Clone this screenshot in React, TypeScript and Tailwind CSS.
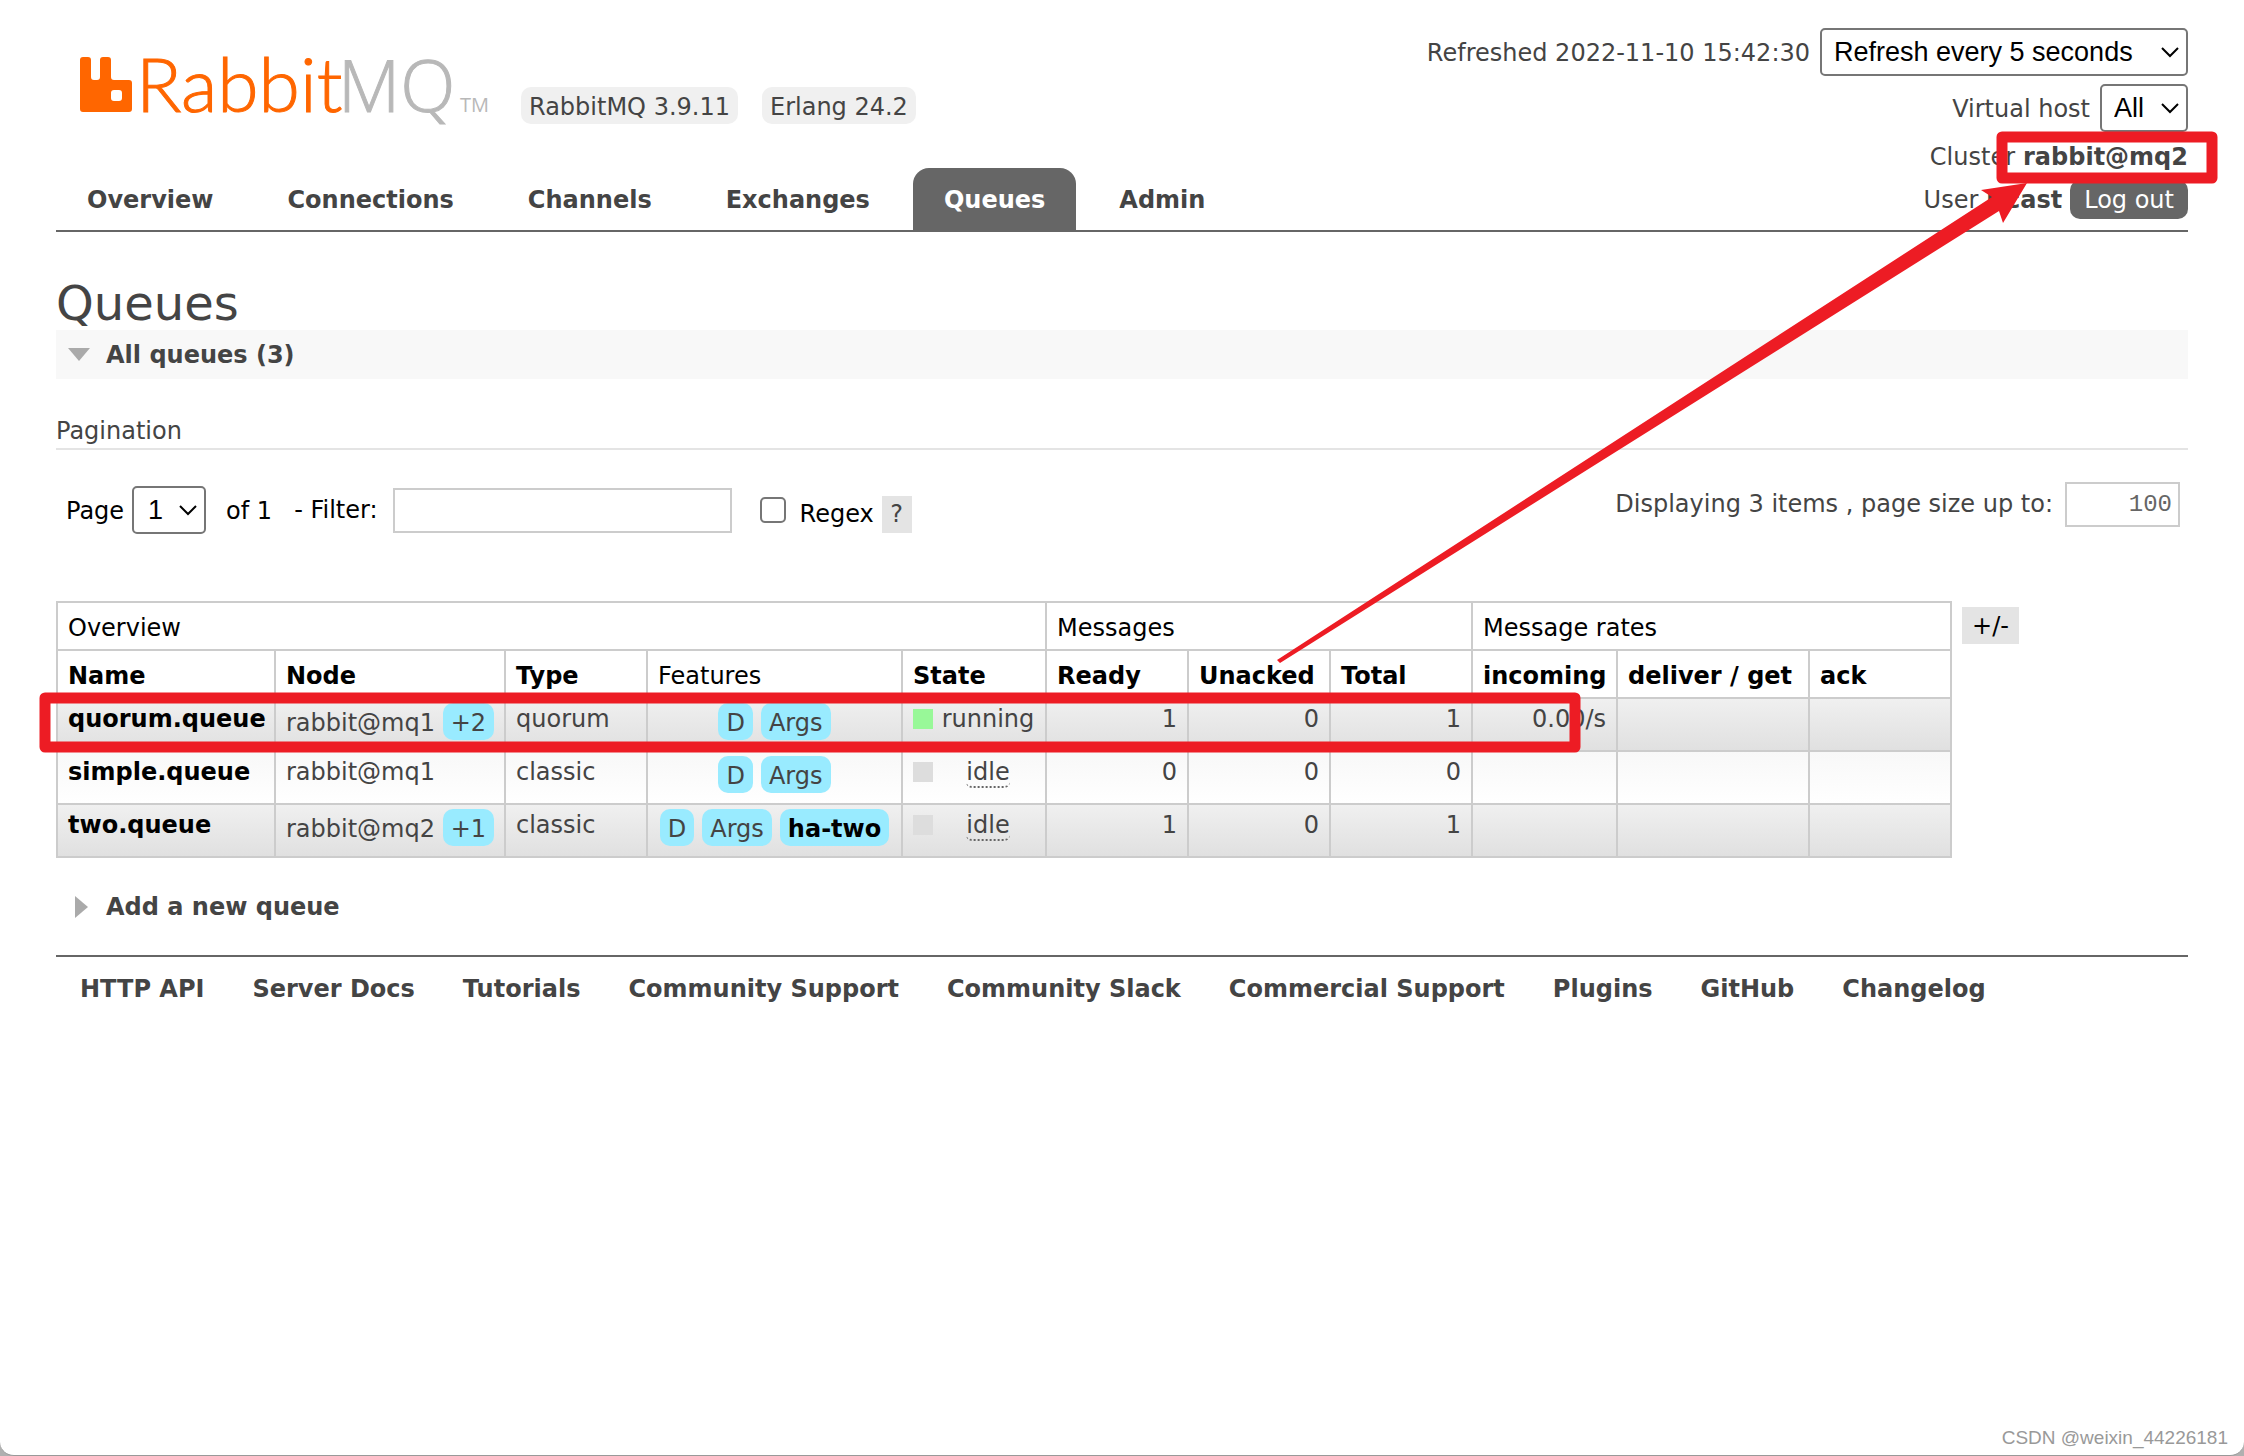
import { ReactNode } from "react";

const tabs = ["Overview", "Connections", "Channels", "Exchanges", "Queues", "Admin"];

const footerLinks = ["HTTP API", "Server Docs", "Tutorials", "Community Support", "Community Slack", "Commercial Support", "Plugins", "GitHub", "Changelog"];

const columns = [
  { label: "Name", width: 218 },
  { label: "Node", width: 230 },
  { label: "Type", width: 142 },
  { label: "Features", width: 255, plain: true },
  { label: "State", width: 144 },
  { label: "Ready", width: 142 },
  { label: "Unacked", width: 142 },
  { label: "Total", width: 142 },
  { label: "incoming", width: 145 },
  { label: "deliver / get", width: 192 },
  { label: "ack", width: 142 },
];

const queues = [
  { name: "quorum.queue", node: "rabbit@mq1", extra: "+2", type: "quorum", policy: "", state: "running", ready: 1, unacked: 0, total: 1, incoming: "0.00/s" },
  { name: "simple.queue", node: "rabbit@mq1", extra: "", type: "classic", policy: "", state: "idle", ready: 0, unacked: 0, total: 0, incoming: "" },
  { name: "two.queue", node: "rabbit@mq2", extra: "+1", type: "classic", policy: "ha-two", state: "idle", ready: 1, unacked: 0, total: 1, incoming: "" },
];

const Logo = () => (
  <svg width="412" height="60" viewBox="0 0 412 60" className="overflow-visible" role="img" aria-label="RabbitMQ">
    <path
      fill="#ff6600"
      d="M3 3h5a3 3 0 0 1 3 3v17a3 3 0 0 0 3 3h3a3 3 0 0 0 3-3V6a3 3 0 0 1 3-3h5a3 3 0 0 1 3 3v17a3 3 0 0 0 3 3h15a3 3 0 0 1 3 3v26a3 3 0 0 1-3 3H3a3 3 0 0 1-3-3V6a3 3 0 0 1 3-3zM34 36a3 3 0 0 0-3 3v5a3 3 0 0 0 3 3h5a3 3 0 0 0 3-3v-5a3 3 0 0 0-3-3z"
    />
    <text x="56" y="58" fontSize="75" fill="#ff6600" stroke="#ff6600" className="font-[Lato,sans-serif] font-light">
      Rabbit
    </text>
    <text x="258" y="58" fontSize="72" fill="#b8b8b8" stroke="#b8b8b8" className="font-['Open_Sans',sans-serif] font-light">
      MQ
    </text>
    <text x="380" y="58" fontSize="20" fill="#b8b8b8" className="font-['Open_Sans',sans-serif]">
      TM
    </text>
  </svg>
);

const Select = ({ id, value, className }: { id: string; value: string; className: string }) => (
  <div className="relative">
    <select
      id={id}
      defaultValue={value}
      className={`h-12 appearance-none rounded-[5px] border-2 border-[#767676] bg-white pl-3 font-['Liberation_Sans',Arial,sans-serif] text-[27px] leading-[32px] text-black ${className}`}
    >
      <option>{value}</option>
    </select>
    <svg width="18" height="12" viewBox="0 0 18 12" className="pointer-events-none absolute top-[18px] right-[9px]">
      <path d="M1 2l8 8 8-8" fill="none" stroke="#000" strokeWidth="2" />
    </svg>
  </div>
);

const Chip = ({ children }: { children: ReactNode }) => <span className="inline-block rounded-[10px] bg-[#99ebff] px-2 pt-[6px] pb-[2px]">{children}</span>;

const Header = () => (
  <header className="flex justify-between border-b-2 border-[#666]">
    <div className="flex flex-col justify-end">
      <div className="mb-11 ml-6 flex h-[70px] gap-6">
        <a href="#/" className="mr-[5px]">
          <Logo />
        </a>
        <span className="self-end rounded-[10px] bg-[#f0f0f0] px-2 pt-[6px] pb-[2px]">RabbitMQ 3.9.11</span>
        <span className="self-end rounded-[10px] bg-[#f0f0f0] px-2 pt-[6px] pb-[2px]">Erlang 24.2</span>
      </div>
      <nav>
        <ul className="flex gap-3">
          {tabs.map((tab) => (
            <li key={tab}>
              <a
                href={`#/${tab.toLowerCase()}`}
                className={`flex h-[62px] items-center rounded-t-[16px] px-[31px] pt-[2px] font-bold ${tab == "Queues" ? "bg-[#666] text-white" : "text-[#444]"}`}
              >
                {tab}
              </a>
            </li>
          ))}
        </ul>
      </nav>
    </div>
    <div className="flex flex-col items-end pt-7 pb-[11px]">
      <div className="flex items-center gap-[10px]">
        <label htmlFor="update-every" className="pt-[2px]">Refreshed 2022-11-10 15:42:30</label>
        <Select id="update-every" value="Refresh every 5 seconds" className="w-[368px]" />
      </div>
      <div className="mt-2 flex items-center gap-[10px]">
        <label htmlFor="show-vhost" className="pt-[2px]">Virtual host</label>
        <Select id="show-vhost" value="All" className="w-[88px]" />
      </div>
      <p className="flex h-12 items-center gap-2 pt-[2px]">
        Cluster <b>rabbit@mq2</b>
      </p>
      <div className="flex items-center gap-2">
        <span className="pt-[2px]">User</span>
        <b className="pt-[2px]">itcast</b>
        <button className="h-[39px] rounded-[10px] bg-[#666] px-[14px] pt-[2px] text-white">Log out</button>
      </div>
    </div>
  </header>
);

const Pagination = () => (
  <div className="mt-8 flex items-start justify-between pr-2 pl-[10px]">
    <div className="flex items-center pt-1 text-black">
      <label htmlFor="page" className="pt-[2px]">Page</label>
      <div className="ml-2">
        <Select id="page" value="1" className="w-[74px] pl-[14px]" />
      </div>
      <span className="ml-5 pt-[2px]">of 1</span>
      <label htmlFor="filter" className="ml-[22px]">
        - Filter:
      </label>
      <input id="filter" type="text" className="ml-[15px] h-[45px] w-[339px] border-2 border-[#ccc] px-2" />
      <input id="regex" type="checkbox" className="ml-7 size-[26px] appearance-none rounded-[5px] border-2 border-[#767676] bg-white" />
      <label htmlFor="regex" className="ml-[14px] pt-2">
        Regex
      </label>
      <button className="mt-2 ml-2 h-[37px] w-[30px] bg-[#e4e4e4] text-[#444]">?</button>
    </div>
    <div className="flex items-center gap-3">
      <label htmlFor="page-size">Displaying 3 items , page size up to:</label>
      <input
        id="page-size"
        type="text"
        defaultValue="100"
        className="h-[45px] w-[115px] border-2 border-[#ccc] pr-[6px] text-right font-['Liberation_Mono',monospace] text-[24px] text-[#666]"
      />
    </div>
  </div>
);

const cell = "border-2 border-[#ccc] px-[10px] align-top";
const textCell = `${cell} pt-[6px]`;
const chipCell = `${cell} pt-1`;
const numberCell = `${textCell} text-right`;

const QueueTable = () => (
  <table className="w-[1896px] table-fixed border-collapse leading-[29px]">
    <colgroup>
      {columns.map((col) => (
        <col key={col.label} style={{ width: col.width }} />
      ))}
    </colgroup>
    <thead className="text-left text-black">
      <tr className="h-12">
        <th colSpan={5} className="border-2 border-[#ccc] px-[10px] pt-1 font-normal">Overview</th>
        <th colSpan={3} className="border-2 border-[#ccc] px-[10px] pt-1 font-normal">Messages</th>
        <th colSpan={3} className="border-2 border-[#ccc] px-[10px] pt-1 font-normal">Message rates</th>
      </tr>
      <tr className="h-12">
        {columns.map((col) => (
          <th key={col.label} className={`border-2 border-[#ccc] px-[10px] pt-1 whitespace-nowrap ${col.plain ? "font-normal" : "font-bold"}`}>
            {col.label}
          </th>
        ))}
      </tr>
    </thead>
    <tbody>
      {queues.map((q, i) => (
        <tr key={q.name} className={`h-[53px] bg-linear-to-b ${i % 2 == 0 ? "from-[#f0f0f0] to-[#e0e0e0]" : "from-[#f8f8f8] to-white"}`}>
          <td className={textCell}>
            <a href={`#/queues/${q.name}`} className="font-bold text-black">{q.name}</a>
          </td>
          <td className={`${q.extra ? chipCell : textCell} whitespace-nowrap`}>
            {q.node} {q.extra && <Chip>{q.extra}</Chip>}
          </td>
          <td className={textCell}>{q.type}</td>
          <td className={chipCell}>
            <div className="flex justify-center gap-2">
              <Chip>D</Chip>
              <Chip>Args</Chip>
              {q.policy && (
                <Chip>
                  <a href="#/policies" className="font-bold text-black">{q.policy}</a>
                </Chip>
              )}
            </div>
          </td>
          <td className={textCell}>
            <div className="flex items-start">
              <div className={`mt-1 size-5 shrink-0 ${q.state == "running" ? "bg-[#98f898]" : "bg-[#ddd]"}`}></div>
              <div className="flex-1 pl-2 text-center">
                {q.state == "idle" ? <abbr className="rounded-[6px] border-b-2 border-dotted border-[#666]">{q.state}</abbr> : q.state}
              </div>
            </div>
          </td>
          <td className={numberCell}>{q.ready}</td>
          <td className={numberCell}>{q.unacked}</td>
          <td className={numberCell}>{q.total}</td>
          <td className={numberCell}>{q.incoming}</td>
          <td className={cell}></td>
          <td className={cell}></td>
        </tr>
      ))}
    </tbody>
  </table>
);

// red markup drawn over the page
const Annotations = () => (
  <svg width="2244" height="780" viewBox="0 0 2244 780" className="pointer-events-none absolute top-0 left-0">
    <g fill="none" stroke="#ed1c24" strokeWidth="11" strokeLinejoin="round">
      <rect x="2002" y="137" width="210" height="41" />
      <rect x="45" y="698" width="1530" height="49" />
    </g>
    <path fill="#ed1c24" d="M1277 660L1992 197L1981 190L2027 183L2003 223L1999 211L1280 663z" />
  </svg>
);

export default function App() {
  return (
    <div className="min-h-screen bg-[#b0b0b0] font-['DejaVu_Sans',Verdana,sans-serif] text-[24px] leading-[29px] text-[#444]">
      <div className="relative flex min-h-screen flex-col overflow-hidden rounded-b-[14px] border-b border-[#999] bg-white px-14">
        <Header />
        <main>
          <h1 className="mt-[45px] pb-px text-[48px] leading-[52px]">Queues</h1>
          <h2 className="flex h-[49px] items-center bg-[#f8f8f8] pl-3 font-bold">
            <svg width="22" height="13" viewBox="0 0 22 13" className="mr-4">
              <path d="M0 0h22L11 13z" fill="#aaa" />
            </svg>
            <span className="pt-[2px]">All queues (3)</span>
          </h2>
          <h3 className="mt-[38px] border-b-2 border-[#e4e4e4] pb-[2px]">Pagination</h3>
          <Pagination />
          <div className="mt-[67px] flex items-start gap-[10px]">
            <QueueTable />
            <button className="mt-[6px] h-[37px] w-[57px] bg-[#e4e4e4] pt-[2px] text-black">+/-</button>
          </div>
          <h2 className="mt-6 flex h-[49px] items-center pl-[19px] font-bold">
            <svg width="13" height="22" viewBox="0 0 13 22" className="mr-[18px]">
              <path d="M0 0v22L13 11z" fill="#aaa" />
            </svg>
            <span className="pt-[2px]">Add a new queue</span>
          </h2>
        </main>
        <footer className="mt-6 border-t-2 border-[#666] pt-[18px] pl-6">
          <ul className="flex gap-12">
            {footerLinks.map((link) => (
              <li key={link}>
                <a href="#/" className="font-bold">{link}</a>
              </li>
            ))}
          </ul>
        </footer>
        <p className="mt-auto -mr-10 mb-[3px] text-right font-['Liberation_Sans',Arial,sans-serif] text-[19px] text-[#999]">CSDN @weixin_44226181</p>
        <Annotations />
      </div>
    </div>
  );
}
